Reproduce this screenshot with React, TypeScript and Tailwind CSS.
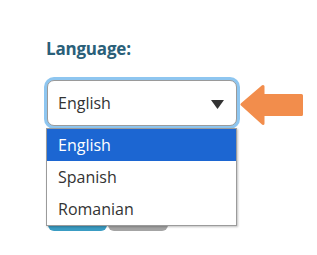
import React from "react";

const options = ["English", "Spanish", "Romanian"];

const App: React.FC = () => {
  const selected = "English";

  return (
    <div className="w-[317px] h-[255px] bg-white font-['Open_Sans',sans-serif]">
      <div className="pt-[38px] pl-[46px]">
        <label className="block text-[17px] leading-[22px] font-bold text-[#2a6079] tracking-[-0.2px]">
          Language:
        </label>

        <div className="mt-[20px] flex items-start">
          <div className="relative ml-[1px]">
            {/* select box with focus glow */}
            <div className="w-[190px] h-[46px] flex items-center justify-between pl-[10px] pr-[12px] border border-[#9a9a9a] rounded-[7px] bg-white shadow-[0_0_0_3px_#8ec6f0]">
              <span className="text-[16px] text-[#333]">{selected}</span>
              <svg width="13" height="9" viewBox="0 0 13 9" className="mt-[3px]">
                <path d="M0 0 H13 L6.5 9 Z" fill="#333" />
              </svg>
            </div>

            {/* open list */}
            <ul className="absolute z-10 left-[-1px] top-[48px] w-[191px] bg-white border border-[#9b9b9b] shadow-[1px_1px_2px_rgba(0,0,0,0.25)]">
              {options.map((opt) => (
                <li
                  key={opt}
                  className={`h-[32px] flex items-center pl-[11px] text-[16px] ${
                    opt === selected ? "bg-[#1c66d2] text-white" : "text-[#333]"
                  }`}
                >
                  {opt}
                </li>
              ))}
            </ul>
          </div>

          <svg width="64" height="46" viewBox="0 0 64 46" className="ml-[3px]">
            <path
              d="M2 24.5 L23 6.5 L23 15.5 L61.5 15.5 L61.5 34.5 L23 34.5 L23 43.5 Z"
              fill="#f28d4c"
              stroke="#f28d4c"
              strokeWidth="3"
              strokeLinejoin="round"
            />
          </svg>
        </div>

        {/* buttons partly hidden behind the list */}
        <div className="mt-[73px] flex gap-[1px] ml-[2px]">
          <button className="w-[59px] h-[32px] bg-[#3a9cc3] rounded-[6px]" />
          <button className="w-[60px] h-[32px] bg-[#a4a4a4] rounded-[6px]" />
        </div>
      </div>
    </div>
  );
};

export default App;
